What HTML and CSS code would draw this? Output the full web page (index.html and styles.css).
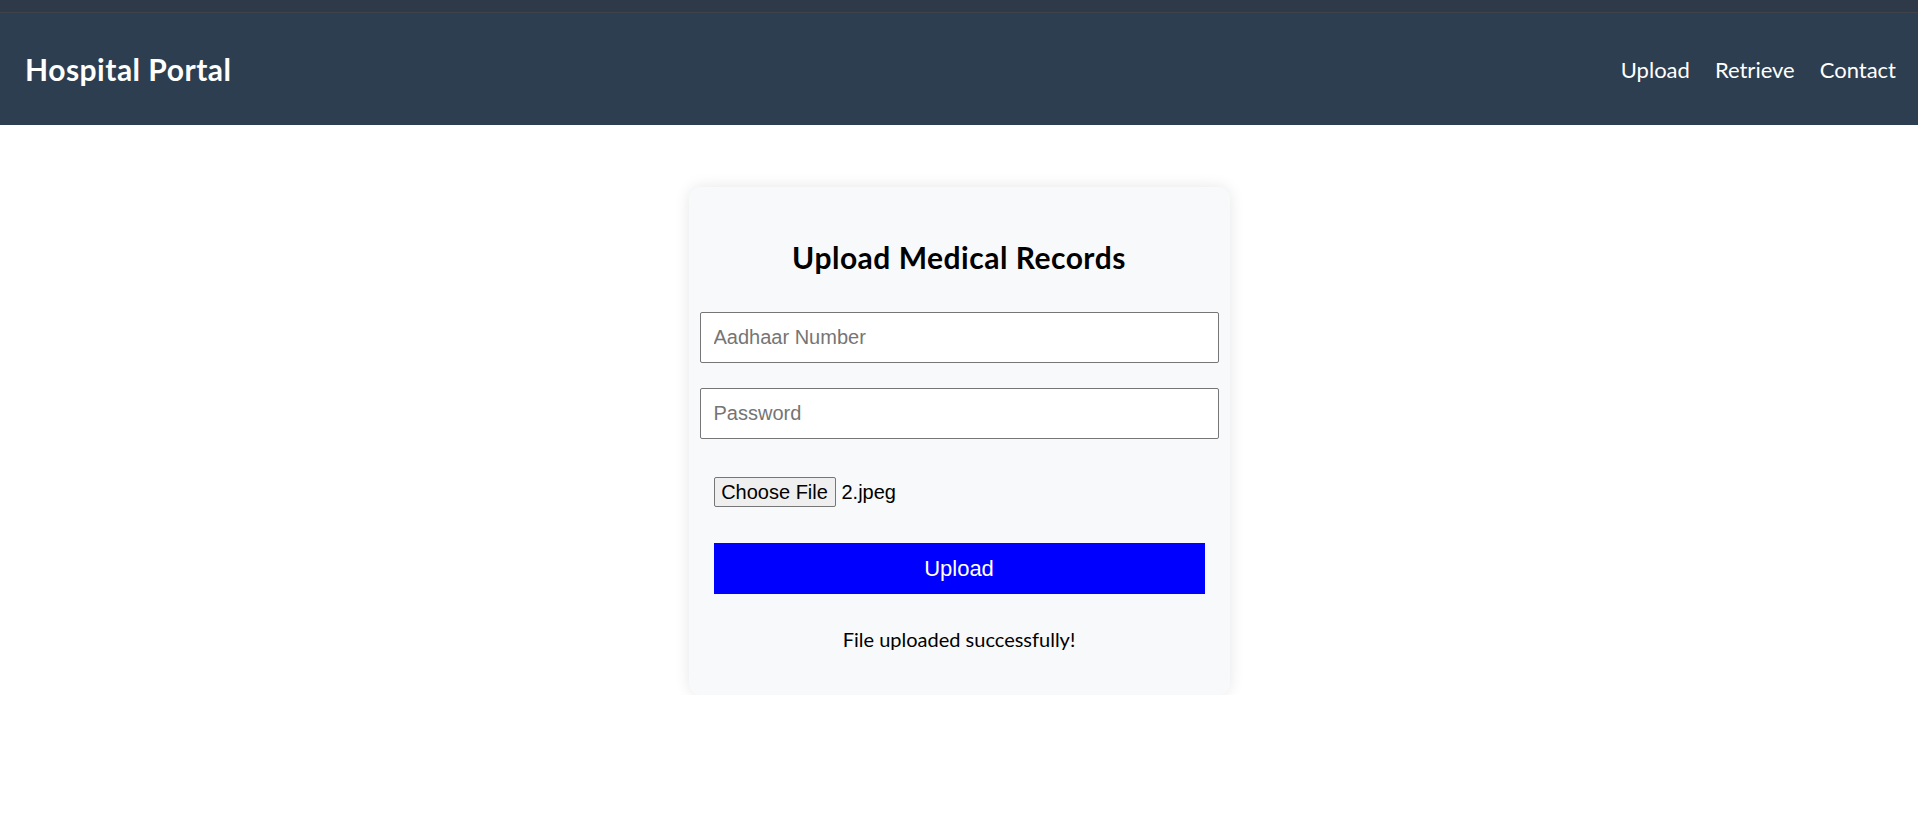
FILE: index.html
```html
<!DOCTYPE html>
<html lang="en">
<head>
<meta charset="utf-8">
<title>Hospital Portal</title>
<link rel="stylesheet" href="styles.css">
</head>
<body>
<div class="topstrip"></div>
<header class="navbar">
  <div class="brand">Hospital Portal</div>
  <nav class="nav">
    <a href="#" class="nav-link">Upload</a>
    <a href="#" class="nav-link">Retrieve</a>
    <a href="#" class="nav-link">Contact</a>
  </nav>
</header>
<main class="main">
  <section class="card">
    <h2 class="card-title">Upload Medical Records</h2>
    <input class="field" type="text" placeholder="Aadhaar Number">
    <input class="field field-second" type="password" placeholder="Password">
    <div class="file-row">
      <button class="file-btn" type="button">Choose File</button>
      <span class="file-name">2.jpeg</span>
    </div>
    <button class="upload-btn" type="button">Upload</button>
    <p class="message">File uploaded successfully!</p>
  </section>
</main>
</body>
</html>
```

FILE: styles.css
```css
html, body {
  margin: 0;
  padding: 0;
  background: #ffffff;
}

body {
  font-family: Lato, "Noto Sans", sans-serif;
  color: #000;
}

.topstrip {
  height: 12px;
  background: #2f3a49;
  border-bottom: 1px solid #3f444c;
}

.navbar {
  height: 112px;
  background: #2c3e50;
  display: flex;
  align-items: center;
  justify-content: space-between;
  padding: 0 22px 0 25px;
}

.brand {
  color: #ffffff;
  font-size: 30px;
  font-weight: 700;
  line-height: 36px;
  letter-spacing: 0.5px;
}

.nav {
  display: flex;
  gap: 25px;
}

.nav-link {
  color: #ffffff;
  text-decoration: none;
  font-size: 22px;
  line-height: 27px;
}

.main {
  display: flex;
  justify-content: center;
  padding-top: 62px;
}

.card {
  box-sizing: border-box;
  width: 541px;
  background: #f8f9fa;
  border-radius: 12px;
  box-shadow: 0 0 15px rgba(0, 0, 0, 0.1);
  padding: 52px 11px 44px 11px;
  display: flex;
  flex-direction: column;
}

.card-title {
  margin: 0 0 37px;
  text-align: center;
  font-size: 30px;
  line-height: 36px;
  font-weight: 700;
  letter-spacing: 0.5px;
}

.field {
  box-sizing: border-box;
  width: 100%;
  height: 51px;
  margin: 0;
  padding: 0 13px;
  border: 1px solid #767676;
  border-radius: 2px;
  background: #ffffff;
  font-family: "Liberation Sans", Arial, sans-serif;
  font-size: 20px;
  color: #000;
}

.field::placeholder {
  color: #757575;
}

.field-second {
  margin-top: 25px;
}

.file-row {
  display: flex;
  align-items: center;
  gap: 6px;
  margin: 38px 0 0 14px;
  font-family: "Liberation Sans", Arial, sans-serif;
  font-size: 20px;
}

.file-btn {
  box-sizing: border-box;
  height: 30px;
  width: 122px;
  padding: 0;
  background: #efefef;
  border: 1px solid #767676;
  border-radius: 2px;
  font-family: "Liberation Sans", Arial, sans-serif;
  font-size: 20px;
  color: #000;
}

.file-name {
  line-height: 23px;
}

.upload-btn {
  box-sizing: border-box;
  height: 51px;
  margin: 36px 14px 0;
  padding: 0;
  background: #0000ff;
  color: #ffffff;
  border: none;
  font-family: "Liberation Sans", Arial, sans-serif;
  font-size: 22px;
}

.message {
  margin: 33px 0 0;
  text-align: center;
  font-size: 20px;
  line-height: 24px;
}
```
